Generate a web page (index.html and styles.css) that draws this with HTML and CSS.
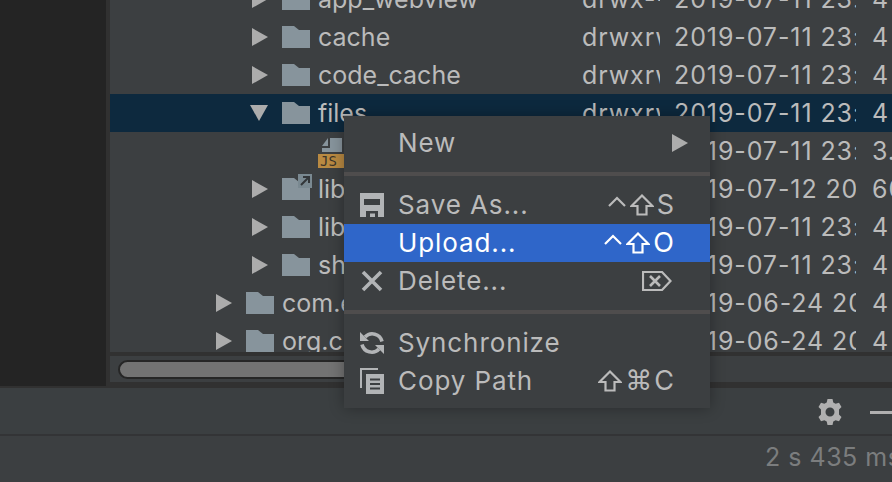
FILE: index.html
```html
<!DOCTYPE html>
<html lang="en">
<head>
<meta charset="utf-8">
<title>Device File Explorer</title>
<link rel="stylesheet" href="styles.css">
</head>
<body>
<svg class="defs" aria-hidden="true">
  <symbol id="folder" viewBox="0 0 28 22"><path d="M0 22V0H12L17 4H28V22Z"/></symbol>
  <symbol id="shift" viewBox="0 0 24 22"><path d="M12 1.500 22.500 12H16.500V20.500H7.500V12H1.500Z" fill="none" stroke="currentColor" stroke-width="2.200"/></symbol>
  <symbol id="caret" viewBox="0 0 18 11"><path d="M1 10 9 2 17 10" fill="none" stroke="currentColor" stroke-width="2.200"/></symbol>
</svg>
<main class="app">
  <section class="top">
    <aside class="sidebar"></aside>
    <div class="explorer">
      <div class="tree">
        <div class="row first depth2"><span class="name"><i class="arrow"></i><svg class="folder"><use href="#folder"/></svg><span>app_webview</span></span><span class="cell">drwx--x--x</span><span class="cell date">2019-07-11 23:59</span><span class="cell size">4 KB</span></div>
        <div class="row depth2"><span class="name"><i class="arrow"></i><svg class="folder"><use href="#folder"/></svg><span>cache</span></span><span class="cell">drwxrwx--x</span><span class="cell date">2019-07-11 23:59</span><span class="cell size">4 KB</span></div>
        <div class="row depth2"><span class="name"><i class="arrow"></i><svg class="folder"><use href="#folder"/></svg><span>code_cache</span></span><span class="cell">drwxrwx--x</span><span class="cell date">2019-07-11 23:59</span><span class="cell size">4 KB</span></div>
        <div class="row depth2 selected"><span class="name"><i class="arrow open"></i><svg class="folder"><use href="#folder"/></svg><span>files</span></span><span class="cell">drwxrwx--x</span><span class="cell date">2019-07-11 23:59</span><span class="cell size">4 KB</span></div>
        <div class="row depth3"><span class="name"><span class="file"><svg class="doc" viewBox="0 0 20 14"><path d="M8 0H20V14H0V10H8Z"/><path d="M6 0V8H0Z"/></svg><b class="badge">JS</b></span></span><span class="cell">-rw-------</span><span class="cell date">2019-07-11 23:59</span><span class="cell size">3.5 KB</span></div>
        <div class="row depth2"><span class="name"><i class="arrow"></i><span class="linked"><svg class="folder"><use href="#folder"/></svg><svg class="link" viewBox="0 0 14 14"><path class="link-bg" d="M0 0H14V14H0Z"/><path class="link-arrow" d="M3 11 10.500 3.500M5 3H11V9" /></svg></span><span>lib</span></span><span class="cell">lrwxrwxrwx</span><span class="cell date">2019-07-12 20:11</span><span class="cell size">60 B</span></div>
        <div class="row depth2"><span class="name"><i class="arrow"></i><svg class="folder"><use href="#folder"/></svg><span>lib</span></span><span class="cell">drwxrwx--x</span><span class="cell date">2019-07-11 23:59</span><span class="cell size">4 KB</span></div>
        <div class="row depth2"><span class="name"><i class="arrow"></i><svg class="folder"><use href="#folder"/></svg><span>shared_prefs</span></span><span class="cell">drwxrwx--x</span><span class="cell date">2019-07-11 23:59</span><span class="cell size">4 KB</span></div>
        <div class="row depth1"><span class="name"><i class="arrow"></i><svg class="folder"><use href="#folder"/></svg><span>com.example</span></span><span class="cell">drwxrwx--x</span><span class="cell date">2019-06-24 20:14</span><span class="cell size">4 KB</span></div>
        <div class="row depth1"><span class="name"><i class="arrow"></i><svg class="folder"><use href="#folder"/></svg><span>org.chromium</span></span><span class="cell">drwxrwx--x</span><span class="cell date">2019-06-24 20:14</span><span class="cell size">4 KB</span></div>
      </div>
      <div class="hscroll"><div class="thumb"></div></div>
    </div>
  </section>
  <section class="toolbar">
    <svg class="gear" viewBox="0 0 24 26"><path fill-rule="evenodd" d="M9.500 0H14.500L15.300 3.400 17.600 4.700 21 3.700 23.500 8 21 10.400V13V15.600L23.500 18 21 22.300 17.600 21.300 15.300 22.600 14.500 26H9.500L8.700 22.600 6.400 21.300 3 22.300 0.500 18 3 15.600V10.400L0.500 8 3 3.700 6.400 4.700 8.700 3.400ZM12 8.500A4.500 4.500 0 1 0 12 17.500 4.500 4.500 0 1 0 12 8.500Z"/></svg>
    <span class="minimize"></span>
  </section>
  <footer class="status">2 s 435 ms</footer>
</main>

<nav class="menu">
  <div class="item"><span class="slot"></span><span class="label">New</span><i class="arrow submenu"></i></div>
  <hr class="sep">
  <div class="item"><span class="slot"><svg class="icon" viewBox="0 0 24 24"><path fill-rule="evenodd" d="M0 0H24V24H18V18H6V24H0ZM4 6V12H20V6ZM10 20.500H15V24H10Z"/></svg></span><span class="label">Save As...</span><span class="keys"><svg class="caret"><use href="#caret"/></svg><svg class="shift"><use href="#shift"/></svg><span class="key">S</span></span></div>
  <div class="item active"><span class="slot"></span><span class="label">Upload...</span><span class="keys"><svg class="caret"><use href="#caret"/></svg><svg class="shift"><use href="#shift"/></svg><span class="key">O</span></span></div>
  <div class="item"><span class="slot"><svg class="icon" viewBox="0 0 24 24"><path d="M3 3 21 21M21 3 3 21" fill="none" stroke="currentColor" stroke-width="3.600"/></svg></span><span class="label">Delete...</span><span class="keys"><svg class="del" viewBox="0 0 30 20"><path d="M1 1H20L28.500 10 20 19H1Z" fill="none" stroke="currentColor" stroke-width="2.200"/><path d="M8 5 18 15M18 5 8 15" fill="none" stroke="currentColor" stroke-width="2.600"/></svg></span></div>
  <hr class="sep">
  <div class="item"><span class="slot"><svg class="icon" viewBox="0 0 24 24"><path d="M22 10.500A10 10 0 0 0 5 6M2 13.500A10 10 0 0 0 19 18" fill="none" stroke="currentColor" stroke-width="3.600"/><path d="M0 1 9 10H0ZM24 23 15 14H24Z"/></svg></span><span class="label">Synchronize</span></div>
  <div class="item"><span class="slot"><svg class="icon copy" viewBox="0 0 24 26"><path fill-rule="evenodd" d="M0 0H18V2H2V20H0ZM6 6H24V26H6ZM10 10.500V12.500H20V10.500ZM10 15V17H20V15ZM10 19.500V21.500H20V19.500Z"/></svg></span><span class="label">Copy Path</span><span class="keys"><svg class="shift"><use href="#shift"/></svg><span class="cmd">⌘</span><span class="key">C</span></span></div>
</nav>
</body>
</html>
```
FILE: styles.css
```css
* { box-sizing: border-box; }
html, body { margin: 0; height: 100%; }
body {
  width: 892px;
  height: 482px;
  overflow: hidden;
  position: relative;
  background: #3c3f41;
  color: #bbbbbb;
  font-family: Inter, "Liberation Sans", sans-serif;
  font-size: 25px;
  line-height: 38px;
}
.defs { width: 0; height: 0; position: absolute; }
.app { display: flex; flex-direction: column; height: 482px; }

.top { display: flex; height: 388px; background: #313131; }
.sidebar { width: 106px; height: 386px; background: #242424; }
.explorer { width: 782px; margin-left: 4px; flex: 1; height: 382px; display: flex; flex-direction: column; }
.tree { height: 352px; overflow: hidden; background: #3c3f41; flex: none; }
.row {
  display: grid;
  grid-template-columns: 457px 78px 181px 1fr;
  column-gap: 15px;
  height: 38px;
  white-space: nowrap;
}
.row.first { margin-top: -20px; }
.row.selected { background: #0d293e; }
.cell { overflow: hidden; letter-spacing: .9px; }
.date { margin-left: -1px; }
.size { padding-left: 1px; }
.name { display: flex; align-items: center; overflow: hidden; }
.depth1 .name { padding-left: 106px; }
.depth2 .name { padding-left: 142px; }
.depth3 .name { padding-left: 208px; }

.arrow {
  flex: none;
  width: 0; height: 0;
  border-style: solid;
  border-width: 9px 0 9px 16px;
  border-color: transparent transparent transparent #acacac;
  margin-right: 14px;
}
.arrow.open {
  border-width: 16px 9px 0 9px;
  border-color: #acacac transparent transparent transparent;
  margin-left: -2px;
}
.folder { flex: none; width: 28px; height: 22px; fill: #87949c; margin-right: 8px; display: block; }
.linked { position: relative; display: block; flex: none; }
.link { position: absolute; left: 16px; top: -4px; width: 14px; height: 14px; }
.link-bg { fill: #7a8991; }
.link-arrow { fill: none; stroke: #33373a; stroke-width: 2; }
.file { display: flex; flex-direction: column; align-items: flex-start; width: 30px; height: 38px; overflow: hidden; }
.doc { width: 20px; height: 14px; margin: 6px 0 2px 4px; fill: #87949c; flex: none; }
.badge {
  display: block;
  flex: none;
  width: 30px;
  height: 14px;
  background: #b98a42;
  color: #3a342a;
  font: 400 14px/14px "DejaVu Sans Mono", monospace;
  padding-left: 2px;
  letter-spacing: 0;
}

.hscroll { height: 26px; margin-top: 4px; padding: 4px 0 0 8px; background: #3c3f41; flex: none; }
.thumb {
  width: 320px;
  height: 19px;
  background: #737373;
  border: 2px solid #262626;
  border-radius: 10px;
}

.toolbar {
  height: 48px;
  display: flex;
  align-items: center;
  justify-content: flex-end;
  background: #3b3f41;
  border-bottom: 2px solid #333436;
  flex: none;
  padding-top: 2px;
}
.gear { width: 24px; height: 26px; fill: #b0b0b0; margin-right: 28px; flex: none; margin-left: -2px; }
.minimize { width: 22px; height: 3px; background: #b0b0b0; flex: none; }
.status { padding: 2px 0 0 765px; line-height: 38px; height: 44px; color: #7b7d7e; white-space: nowrap; letter-spacing: .5px; }

.menu {
  position: absolute;
  left: 344px;
  top: 116px;
  width: 366px;
  height: 292px;
  padding: 8px 0;
  background: #3c3f41;
  box-shadow: 0 0 14px rgba(0, 0, 0, .32);
}
.item { display: flex; align-items: center; height: 38px; padding: 0 36px 0 16px; }
.item.active { background: #2f66c9; color: #ffffff; }
.slot { width: 24px; margin-right: 14px; flex: none; display: flex; align-items: center; justify-content: center; }
.label { flex: 1; white-space: nowrap; letter-spacing: .9px; font-size: 26px; }
.sep { height: 4px; margin: 10px 0; border: 0; background: #4f4d4d; }
.icon { display: block; width: 24px; height: 24px; fill: currentColor; color: #b2b4b6; }
.icon.copy { height: 26px; }
.arrow.submenu { margin: 0 -14px 0 0; border-width: 9px 0 9px 16px; }
.keys { display: flex; align-items: center; color: #bbbbbb; }
.active .keys { color: #ffffff; }
.caret { width: 18px; height: 11px; margin-right: 4px; margin-top: -7px; }
.shift { width: 24px; height: 22px; margin-right: 3px; }
.key { line-height: 38px; font-size: 27px; }
.cmd { font-family: "DejaVu Sans", sans-serif; font-size: 27px; margin-right: 2px; }
.del { width: 30px; height: 20px; margin-right: 2px; }
```
